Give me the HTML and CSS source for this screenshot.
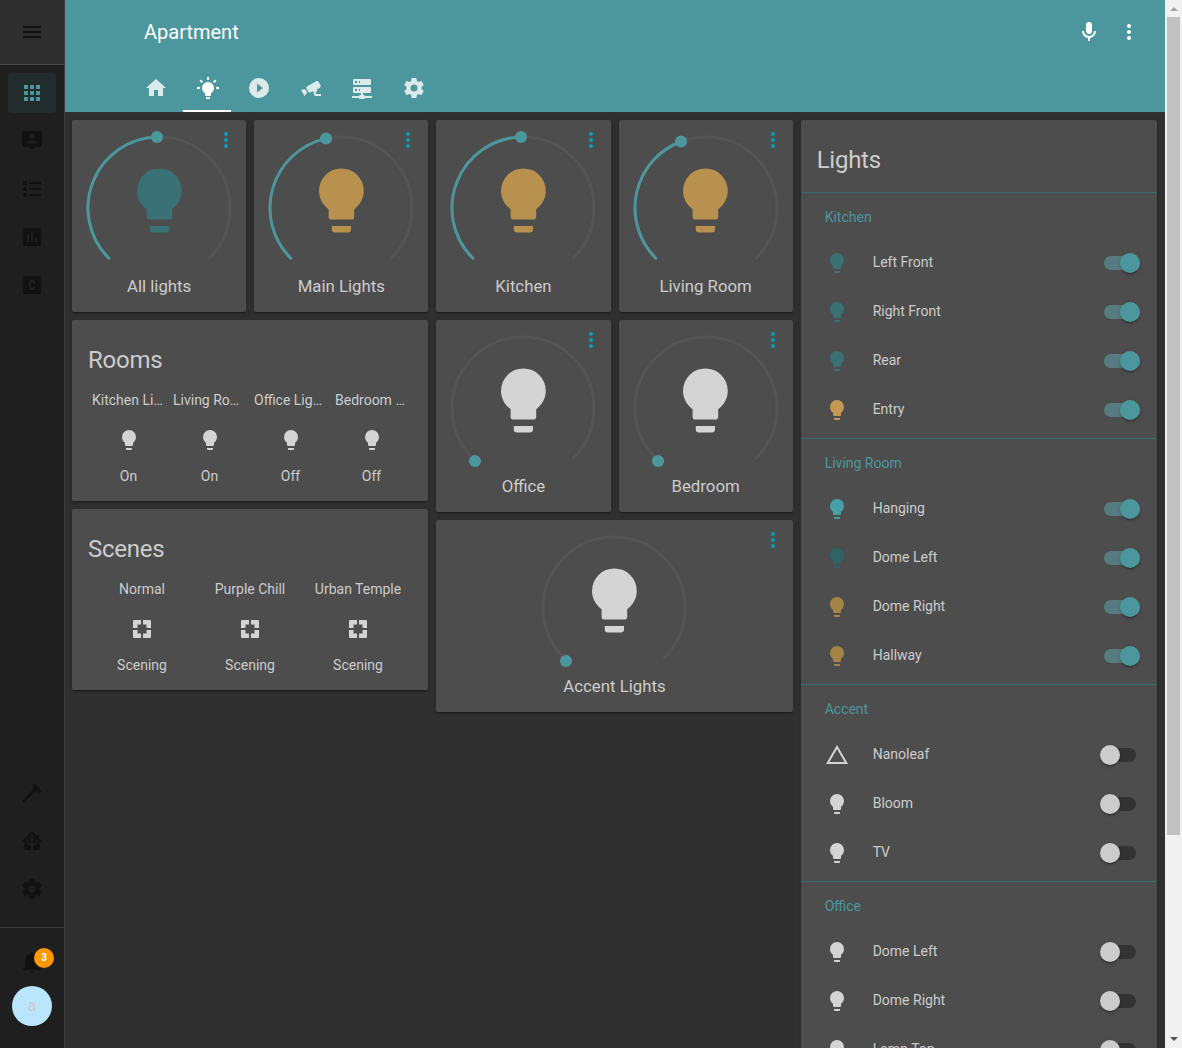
FILE: index.html
```html
<!DOCTYPE html>
<html lang="en">
<head>
<meta charset="utf-8">
<title>Apartment</title>
<link rel="stylesheet" href="styles.css">
</head>
<body>
<svg class="sprite" aria-hidden="true">
  <symbol id="i-bulb" viewBox="0 0 24 24"><path d="M12,2A7,7 0 0,0 5,9C5,11.38 6.19,13.47 8,14.74V17A1,1 0 0,0 9,18H15A1,1 0 0,0 16,17V14.74C17.81,13.47 19,11.38 19,9A7,7 0 0,0 12,2M9,21A1,1 0 0,0 10,22H14A1,1 0 0,0 15,21V20H9V21Z"/></symbol>
  <symbol id="i-dots" viewBox="0 0 24 24"><path d="M12,16A2,2 0 0,1 14,18A2,2 0 0,1 12,20A2,2 0 0,1 10,18A2,2 0 0,1 12,16M12,10A2,2 0 0,1 14,12A2,2 0 0,1 12,14A2,2 0 0,1 10,12A2,2 0 0,1 12,10M12,4A2,2 0 0,1 14,6A2,2 0 0,1 12,8A2,2 0 0,1 10,6A2,2 0 0,1 12,4Z"/></symbol>
  <symbol id="i-cog" viewBox="0 0 24 24"><path d="M12,15.5A3.5,3.5 0 0,1 8.5,12A3.5,3.5 0 0,1 12,8.5A3.5,3.5 0 0,1 15.5,12A3.5,3.5 0 0,1 12,15.5M19.43,12.97C19.47,12.65 19.5,12.33 19.5,12C19.5,11.67 19.47,11.34 19.43,11L21.54,9.37C21.73,9.22 21.78,8.95 21.66,8.73L19.66,5.27C19.54,5.05 19.27,4.96 19.05,5.05L16.56,6.05C16.04,5.66 15.5,5.32 14.87,5.07L14.5,2.42C14.46,2.18 14.25,2 14,2H10C9.75,2 9.54,2.18 9.5,2.42L9.13,5.07C8.5,5.32 7.96,5.66 7.44,6.05L4.95,5.05C4.73,4.96 4.46,5.05 4.34,5.27L2.34,8.73C2.21,8.95 2.27,9.22 2.46,9.37L4.57,11C4.53,11.34 4.5,11.67 4.5,12C4.5,12.33 4.53,12.65 4.57,12.97L2.46,14.63C2.27,14.78 2.21,15.05 2.34,15.27L4.34,18.73C4.46,18.95 4.73,19.03 4.95,18.95L7.44,17.94C7.96,18.34 8.5,18.68 9.13,18.93L9.5,21.58C9.54,21.82 9.75,22 10,22H14C14.25,22 14.46,21.82 14.5,21.58L14.87,18.93C15.5,18.67 16.04,18.34 16.56,17.94L19.05,18.95C19.27,19.03 19.54,18.95 19.66,18.73L21.66,15.27C21.78,15.05 21.73,14.78 21.54,14.63L19.43,12.97Z"/></symbol>
  <symbol id="i-scene" viewBox="0 0 24 24"><path d="M4,3H11V7.5H7.5V11H3V4A1,1 0 0,1 4,3ZM13,3H20A1,1 0 0,1 21,4V11H16.5V7.5H13ZM3,13H7.5V16.5H11V21H4A1,1 0 0,1 3,20ZM16.5,13H21V20A1,1 0 0,1 20,21H13V16.5H16.5Z"/></symbol>
</svg>

<div class="app">
  <aside class="sidebar">
    <div class="side-top">
      <svg class="ic" viewBox="0 0 24 24"><path d="M3,6H21V8H3V6M3,11H21V13H3V11M3,16H21V18H3V16Z"/></svg>
    </div>
    <nav class="side-nav">
      <a class="side-item side-item-on"><svg class="ic" viewBox="0 0 24 24"><path d="M16,20H20V16H16M16,14H20V10H16M10,8H14V4H10M16,8H20V4H16M10,14H14V10H10M4,14H8V10H4M4,20H8V16H4M10,20H14V16H10M4,8H8V4H4V8Z"/></svg></a>
      <a class="side-item"><svg class="ic" viewBox="0 0 24 24"><path fill-rule="evenodd" d="M4,2H20A2,2 0 0,1 22,4V16A2,2 0 0,1 20,18H15L12,21L9,18H4A2,2 0 0,1 2,16V4A2,2 0 0,1 4,2ZM12,4.5A2.5,2.5 0 0,0 9.5,7A2.5,2.5 0 0,0 12,9.5A2.5,2.5 0 0,0 14.5,7A2.5,2.5 0 0,0 12,4.5ZM6.5,14.5H17.5V13.5C17.5,11.8 14,11 12,11C10,11 6.5,11.8 6.5,13.5Z"/></svg></a>
      <a class="side-item"><svg class="ic" viewBox="0 0 24 24"><path d="M5,9.5L7.5,14H2.5L5,9.5M3,4H7V8H3V4M5,20A2,2 0 0,0 7,18A2,2 0 0,0 5,16A2,2 0 0,0 3,18A2,2 0 0,0 5,20M9,5V7H21V5H9M9,19H21V17H9V19M9,13H21V11H9V13Z"/></svg></a>
      <a class="side-item"><svg class="ic" viewBox="0 0 24 24"><path fill-rule="evenodd" d="M5,3H19C20.1,3 21,3.9 21,5V19C21,20.1 20.1,21 19,21H5C3.9,21 3,20.1 3,19V5C3,3.9 3.9,3 5,3ZM7,17H9V10H7ZM11,17H13V7H11ZM15,17H17V13H15Z"/></svg></a>
      <a class="side-item"><svg class="ic" viewBox="0 0 24 24"><path fill-rule="evenodd" d="M5,3H19A2,2 0 0,1 21,5V19A2,2 0 0,1 19,21H5A2,2 0 0,1 3,19V5A2,2 0 0,1 5,3ZM11,7A2,2 0 0,0 9,9V15A2,2 0 0,0 11,17H13A2,2 0 0,0 15,15V14H13V15H11V9H13V10H15V9A2,2 0 0,0 13,7Z"/></svg></a>
    </nav>
    <nav class="side-tools">
      <a class="side-item"><svg class="ic" viewBox="0 0 24 24"><path d="M2 19.63L13.43 8.2L12.72 7.5L14.14 6.07L12 3.89C13.2 2.7 15.09 2.7 16.27 3.89L19.87 7.5L18.45 8.91H21.29L22 9.62L18.45 13.21L17.74 12.5V9.62L16.27 11.04L15.56 10.33L4.13 21.76L2 19.63Z"/></svg></a>
      <a class="side-item"><svg class="ic" viewBox="0 0 24 24"><path d="M21.8,13H20V21H13V17.67L15.79,14.88L16.5,15C17.66,15 18.6,14.06 18.6,12.9C18.6,11.74 17.66,10.8 16.5,10.8A2.1,2.1 0 0,0 14.4,12.9L14.5,13.61L13,15.13V9.65C13.66,9.29 14.1,8.6 14.1,7.8A2.1,2.1 0 0,0 12,5.7A2.1,2.1 0 0,0 9.9,7.8C9.9,8.6 10.34,9.29 11,9.65V15.13L9.5,13.61L9.6,12.9A2.1,2.1 0 0,0 7.5,10.8A2.1,2.1 0 0,0 5.4,12.9A2.1,2.1 0 0,0 7.5,15L8.21,14.88L11,17.67V21H4V13H2.25C1.83,13 1.42,13 1.42,12.79C1.43,12.57 1.85,12.15 2.28,11.72L11,3C11.33,2.67 11.67,2.33 12,2.33C12.33,2.33 12.67,2.67 13,3L17,7V6H19V9L21.78,11.78C22.18,12.18 22.59,12.59 22.6,12.8C22.6,13 22.2,13 21.8,13M7.5,12A0.9,0.9 0 0,1 8.4,12.9A0.9,0.9 0 0,1 7.5,13.8A0.9,0.9 0 0,1 6.6,12.9A0.9,0.9 0 0,1 7.5,12M16.5,12C17,12 17.4,12.4 17.4,12.9C17.4,13.4 17,13.8 16.5,13.8A0.9,0.9 0 0,1 15.6,12.9A0.9,0.9 0 0,1 16.5,12M12,6.9C12.5,6.9 12.9,7.3 12.9,7.8C12.9,8.3 12.5,8.7 12,8.7C11.5,8.7 11.1,8.3 11.1,7.8C11.1,7.3 11.5,6.9 12,6.9Z"/></svg></a>
      <a class="side-item"><svg class="ic"><use href="#i-cog"/></svg></a>
    </nav>
    <div class="side-user">
      <a class="side-bell">
        <svg class="ic" viewBox="0 0 24 24"><path d="M21,19V20H3V19L5,17V11C5,7.9 7.03,5.17 10,4.29C10,4.19 10,4.1 10,4A2,2 0 0,1 12,2A2,2 0 0,1 14,4C14,4.1 14,4.19 14,4.29C16.97,5.17 19,7.9 19,11V17L21,19M14,21A2,2 0 0,1 12,23A2,2 0 0,1 10,21"/></svg>
        <span class="badge">3</span>
      </a>
      <div class="avatar">a</div>
    </div>
  </aside>

  <div class="main">
    <header class="topbar">
      <div class="topbar-row">
        <h1 class="topbar-title">Apartment</h1>
        <svg class="ic topbar-mic" viewBox="0 0 24 24"><path d="M12,2A3,3 0 0,1 15,5V11A3,3 0 0,1 12,14A3,3 0 0,1 9,11V5A3,3 0 0,1 12,2M19,11C19,14.53 16.39,17.44 13,17.93V21H11V17.93C7.61,17.44 5,14.53 5,11H7A5,5 0 0,0 12,16A5,5 0 0,0 17,11H19Z"/></svg>
        <svg class="ic topbar-dots"><use href="#i-dots"/></svg>
      </div>
      <div class="tabs">
        <a class="tab"><svg class="ic" viewBox="0 0 24 24"><path d="M10,20V14H14V20H19V12H22L12,3L2,12H5V20H10Z"/></svg></a>
        <a class="tab tab-on"><svg class="ic" viewBox="0 0 24 24"><path d="M12,6A6,6 0 0,1 18,12C18,14.22 16.79,16.16 15,17.2V19A1,1 0 0,1 14,20H10A1,1 0 0,1 9,19V17.2C7.21,16.16 6,14.22 6,12A6,6 0 0,1 12,6M14,21V22A1,1 0 0,1 13,23H11A1,1 0 0,1 10,22V21H14M20,11H23V13H20V11M1,11H4V13H1V11M13,1V4H11V1H13M4.92,3.5L7.05,5.64L5.63,7.05L3.5,4.93L4.92,3.5M16.95,5.63L19.07,3.5L20.5,4.93L18.37,7.05L16.95,5.63Z"/></svg></a>
        <a class="tab"><svg class="ic" viewBox="0 0 24 24"><path fill-rule="evenodd" d="M10,16.5V7.5L16,12ZM12,2A10,10 0 0,0 2,12A10,10 0 0,0 12,22A10,10 0 0,0 22,12A10,10 0 0,0 12,2Z"/></svg></a>
        <a class="tab"><svg class="ic" viewBox="0 0 24 24"><path d="M18.15,4.94C17.77,4.91 17.37,5 17,5.2L8.35,10.2C7.39,10.76 7.07,12 7.62,12.94L9.12,15.53C9.67,16.5 10.89,16.82 11.85,16.27L13.65,15.23C13.92,15.69 14.32,16.06 14.8,16.27V18.04C14.8,19.13 15.69,20 16.8,20H22V18.04H16.8V16.27C17.59,15.95 18.12,15.18 18.12,14.3C18.12,14 18.06,13.71 17.95,13.44L20.73,11.84C21.69,11.29 22,10.07 21.47,9.11L19.97,6.5C19.6,5.89 19,5 18.15,4.94M6.22,13.17L2,13.87L2.75,15.17L4.75,18.63L5.5,19.93L8.22,16.63L6.22,13.17Z"/></svg></a>
        <a class="tab"><svg class="ic" viewBox="0 0 24 24"><path fill-rule="evenodd" d="M13,19H14A1,1 0 0,1 15,20H22V22H15A1,1 0 0,1 14,23H10A1,1 0 0,1 9,22H2V20H9A1,1 0 0,1 10,19H11V17H4A1,1 0 0,1 3,16V12A1,1 0 0,1 4,11H20A1,1 0 0,1 21,12V16A1,1 0 0,1 20,17H13ZM4,3H20A1,1 0 0,1 21,4V8A1,1 0 0,1 20,9H4A1,1 0 0,1 3,8V4A1,1 0 0,1 4,3ZM9,7H10V5H9ZM9,15H10V13H9ZM5,5V7H7V5ZM5,13V15H7V13Z"/></svg></a>
        <a class="tab"><svg class="ic"><use href="#i-cog"/></svg></a>
      </div>
    </header>

    <main class="columns">
      <div class="column">
        <div class="pair">
          <section class="card dial-card">
            <svg class="dial" viewBox="0 0 150 141"><path class="dial-track" d="M24.8 125.2A71 71 0 1 1 125.2 125.2"/><path class="dial-value" d="M24.8 125.2A71 71 0 0 1 73 4"/><circle class="dial-thumb" cx="73" cy="4" r="6"/></svg>
            <svg class="dial-bulb tone-teal"><use href="#i-bulb"/></svg>
            <svg class="ic card-menu"><use href="#i-dots"/></svg>
            <div class="dial-name">All lights</div>
          </section>
          <section class="card dial-card">
            <svg class="dial" viewBox="0 0 150 141"><path class="dial-track" d="M24.8 125.2A71 71 0 1 1 125.2 125.2"/><path class="dial-value" d="M24.8 125.2A71 71 0 0 1 60 5.6"/><circle class="dial-thumb" cx="60" cy="5.6" r="6"/></svg>
            <svg class="dial-bulb tone-gold"><use href="#i-bulb"/></svg>
            <svg class="ic card-menu"><use href="#i-dots"/></svg>
            <div class="dial-name">Main Lights</div>
          </section>
        </div>

        <section class="card block-card">
          <h2 class="card-title">Rooms</h2>
          <div class="glance glance-4">
            <div class="glance-cell"><div class="glance-name">Kitchen Lights</div><svg class="ic glance-icon"><use href="#i-bulb"/></svg><div class="glance-state">On</div></div>
            <div class="glance-cell"><div class="glance-name">Living Room Lights</div><svg class="ic glance-icon"><use href="#i-bulb"/></svg><div class="glance-state">On</div></div>
            <div class="glance-cell"><div class="glance-name">Office Lights</div><svg class="ic glance-icon"><use href="#i-bulb"/></svg><div class="glance-state">Off</div></div>
            <div class="glance-cell"><div class="glance-name">Bedroom Lights</div><svg class="ic glance-icon"><use href="#i-bulb"/></svg><div class="glance-state">Off</div></div>
          </div>
        </section>

        <section class="card block-card">
          <h2 class="card-title">Scenes</h2>
          <div class="glance glance-3">
            <div class="glance-cell"><div class="glance-name">Normal</div><svg class="ic glance-icon"><use href="#i-scene"/></svg><div class="glance-state">Scening</div></div>
            <div class="glance-cell"><div class="glance-name">Purple Chill</div><svg class="ic glance-icon"><use href="#i-scene"/></svg><div class="glance-state">Scening</div></div>
            <div class="glance-cell"><div class="glance-name">Urban Temple</div><svg class="ic glance-icon"><use href="#i-scene"/></svg><div class="glance-state">Scening</div></div>
          </div>
        </section>
      </div>

      <div class="column">
        <div class="pair">
          <section class="card dial-card">
            <svg class="dial" viewBox="0 0 150 141"><path class="dial-track" d="M24.8 125.2A71 71 0 1 1 125.2 125.2"/><path class="dial-value" d="M24.8 125.2A71 71 0 0 1 73 4"/><circle class="dial-thumb" cx="73" cy="4" r="6"/></svg>
            <svg class="dial-bulb tone-gold"><use href="#i-bulb"/></svg>
            <svg class="ic card-menu"><use href="#i-dots"/></svg>
            <div class="dial-name">Kitchen</div>
          </section>
          <section class="card dial-card">
            <svg class="dial" viewBox="0 0 150 141"><path class="dial-track" d="M24.8 125.2A71 71 0 1 1 125.2 125.2"/><path class="dial-value" d="M24.8 125.2A71 71 0 0 1 50 8.5"/><circle class="dial-thumb" cx="50" cy="8.5" r="6"/></svg>
            <svg class="dial-bulb tone-gold"><use href="#i-bulb"/></svg>
            <svg class="ic card-menu"><use href="#i-dots"/></svg>
            <div class="dial-name">Living Room</div>
          </section>
        </div>
        <div class="pair">
          <section class="card dial-card">
            <svg class="dial" viewBox="0 0 150 141"><path class="dial-track" d="M24.8 125.2A71 71 0 1 1 125.2 125.2"/><circle class="dial-thumb" cx="27" cy="128" r="6"/></svg>
            <svg class="dial-bulb tone-off"><use href="#i-bulb"/></svg>
            <svg class="ic card-menu"><use href="#i-dots"/></svg>
            <div class="dial-name">Office</div>
          </section>
          <section class="card dial-card">
            <svg class="dial" viewBox="0 0 150 141"><path class="dial-track" d="M24.8 125.2A71 71 0 1 1 125.2 125.2"/><circle class="dial-thumb" cx="27" cy="128" r="6"/></svg>
            <svg class="dial-bulb tone-off"><use href="#i-bulb"/></svg>
            <svg class="ic card-menu"><use href="#i-dots"/></svg>
            <div class="dial-name">Bedroom</div>
          </section>
        </div>
        <section class="card dial-card">
          <svg class="dial" viewBox="0 0 150 141"><path class="dial-track" d="M24.8 125.2A71 71 0 1 1 125.2 125.2"/><circle class="dial-thumb" cx="27" cy="128" r="6"/></svg>
          <svg class="dial-bulb tone-off"><use href="#i-bulb"/></svg>
          <svg class="ic card-menu"><use href="#i-dots"/></svg>
          <div class="dial-name">Accent Lights</div>
        </section>
      </div>

      <div class="column">
        <section class="card list-card">
          <h2 class="list-title">Lights</h2>

          <div class="group">
            <div class="group-label">Kitchen</div>
            <div class="row"><svg class="ic row-icon tone-teal"><use href="#i-bulb"/></svg><span class="row-name">Left Front</span><span class="toggle toggle-on"><i class="track"></i><i class="knob"></i></span></div>
            <div class="row"><svg class="ic row-icon tone-teal"><use href="#i-bulb"/></svg><span class="row-name">Right Front</span><span class="toggle toggle-on"><i class="track"></i><i class="knob"></i></span></div>
            <div class="row"><svg class="ic row-icon tone-teal"><use href="#i-bulb"/></svg><span class="row-name">Rear</span><span class="toggle toggle-on"><i class="track"></i><i class="knob"></i></span></div>
            <div class="row"><svg class="ic row-icon tone-gold-bright"><use href="#i-bulb"/></svg><span class="row-name">Entry</span><span class="toggle toggle-on"><i class="track"></i><i class="knob"></i></span></div>
          </div>

          <div class="group">
            <div class="group-label">Living Room</div>
            <div class="row"><svg class="ic row-icon tone-teal-bright"><use href="#i-bulb"/></svg><span class="row-name">Hanging</span><span class="toggle toggle-on"><i class="track"></i><i class="knob"></i></span></div>
            <div class="row"><svg class="ic row-icon tone-teal-dim"><use href="#i-bulb"/></svg><span class="row-name">Dome Left</span><span class="toggle toggle-on"><i class="track"></i><i class="knob"></i></span></div>
            <div class="row"><svg class="ic row-icon tone-gold-dim"><use href="#i-bulb"/></svg><span class="row-name">Dome Right</span><span class="toggle toggle-on"><i class="track"></i><i class="knob"></i></span></div>
            <div class="row"><svg class="ic row-icon tone-gold-dim"><use href="#i-bulb"/></svg><span class="row-name">Hallway</span><span class="toggle toggle-on"><i class="track"></i><i class="knob"></i></span></div>
          </div>

          <div class="group">
            <div class="group-label">Accent</div>
            <div class="row"><svg class="ic row-icon tone-off" viewBox="0 0 24 24"><path fill-rule="evenodd" d="M12,2L1,21H23ZM12,6L19.53,19H4.47Z"/></svg><span class="row-name">Nanoleaf</span><span class="toggle"><i class="track"></i><i class="knob"></i></span></div>
            <div class="row"><svg class="ic row-icon tone-off"><use href="#i-bulb"/></svg><span class="row-name">Bloom</span><span class="toggle"><i class="track"></i><i class="knob"></i></span></div>
            <div class="row"><svg class="ic row-icon tone-off"><use href="#i-bulb"/></svg><span class="row-name">TV</span><span class="toggle"><i class="track"></i><i class="knob"></i></span></div>
          </div>

          <div class="group">
            <div class="group-label">Office</div>
            <div class="row"><svg class="ic row-icon tone-off"><use href="#i-bulb"/></svg><span class="row-name">Dome Left</span><span class="toggle"><i class="track"></i><i class="knob"></i></span></div>
            <div class="row"><svg class="ic row-icon tone-off"><use href="#i-bulb"/></svg><span class="row-name">Dome Right</span><span class="toggle"><i class="track"></i><i class="knob"></i></span></div>
            <div class="row"><svg class="ic row-icon tone-off"><use href="#i-bulb"/></svg><span class="row-name">Lamp Top</span><span class="toggle"><i class="track"></i><i class="knob"></i></span></div>
          </div>

          <div class="group">
            <div class="group-label">Bedroom</div>
            <div class="row"><svg class="ic row-icon tone-off"><use href="#i-bulb"/></svg><span class="row-name">Dome Left</span><span class="toggle"><i class="track"></i><i class="knob"></i></span></div>
            <div class="row"><svg class="ic row-icon tone-off"><use href="#i-bulb"/></svg><span class="row-name">Dome Right</span><span class="toggle"><i class="track"></i><i class="knob"></i></span></div>
            <div class="row"><svg class="ic row-icon tone-off"><use href="#i-bulb"/></svg><span class="row-name">Lamp</span><span class="toggle"><i class="track"></i><i class="knob"></i></span></div>
          </div>
        </section>
      </div>
    </main>
  </div>
</div>

<div class="scrollbar" aria-hidden="true">
  <span class="scroll-up"></span>
  <span class="scroll-thumb"></span>
  <span class="scroll-down"></span>
</div>
</body>
</html>
```
FILE: styles.css
```css
* { box-sizing: border-box; }

html, body { margin: 0; padding: 0; }

body {
  background: #303030;
  color: #cccccc;
  font-family: Roboto, "Liberation Sans", sans-serif;
  font-size: 14px;
  line-height: 20px;
}

.sprite { display: none; }

.ic { display: block; width: 24px; height: 24px; fill: currentColor; flex: none; }

.app { display: flex; align-items: flex-start; padding-right: 17px; }

/* Window scrollbar */
.scrollbar {
  position: fixed;
  top: 0;
  right: 0;
  bottom: 0;
  width: 17px;
  background: #f1f1f1;
  display: flex;
  flex-direction: column;
  align-items: center;
  padding: 7px 0;
}

.scroll-up { width: 0; height: 0; border: 4px solid transparent; border-top: 0; border-bottom-color: #a3a3a3; }

.scroll-thumb { width: 13px; height: 818px; margin-top: 6px; background: #c1c1c1; }

.scroll-down { width: 0; height: 0; margin-top: auto; border: 4px solid transparent; border-bottom: 0; border-top-color: #505050; }

/* Sidebar */
.sidebar {
  position: sticky;
  top: 0;
  width: 65px;
  height: 100vh;
  flex: none;
  display: flex;
  flex-direction: column;
  background: #1f1f1f;
  border-right: 1px solid #3b3b3b;
  color: #111111;
}

.side-top {
  height: 65px;
  flex: none;
  display: flex;
  align-items: center;
  justify-content: center;
  background: #2e2e2e;
  border-bottom: 1px solid #4a4a4a;
}

.side-nav { display: flex; flex-direction: column; padding-top: 8px; }

.side-tools { display: flex; flex-direction: column; margin-top: auto; padding-bottom: 10px; }

.side-item {
  width: 48px;
  height: 40px;
  margin: 0 8px 8px;
  display: flex;
  align-items: center;
  justify-content: center;
  border-radius: 4px;
}

.side-item-on { background: #222c2d; color: #4b979d; }

.side-user {
  height: 121px;
  flex: none;
  border-top: 1px solid #3b3b3b;
}

.side-bell { display: block; width: 24px; margin: 22px auto 0; position: relative; }

.badge {
  position: absolute;
  left: 14px;
  top: -2px;
  width: 20px;
  height: 20px;
  border-radius: 50%;
  background: #ff9800;
  color: #ffffff;
  font-size: 10px;
  font-weight: 700;
  line-height: 20px;
  text-align: center;
}

.avatar {
  width: 40px;
  height: 40px;
  margin: 12px auto 0;
  border-radius: 50%;
  background: #b9e6fc;
  color: #cccccc;
  font-size: 16px;
  line-height: 40px;
  text-align: center;
}

/* Main */
.main { flex: 1; min-width: 0; }

.topbar { height: 112px; background: #4b979d; color: #ffffff; display: flex; flex-direction: column; }

.topbar-row { height: 64px; display: flex; align-items: center; padding-left: 79px; }

.topbar-title { margin: 0; flex: 1; font-size: 20px; font-weight: 400; line-height: 28px; }

.topbar-mic { margin-right: 16px; }

.topbar-dots { margin-right: 24px; }

.tabs { display: flex; padding-left: 65.2px; height: 48px; }

.tab {
  width: 51.6px;
  height: 48px;
  display: flex;
  align-items: center;
  justify-content: center;
  color: rgba(255, 255, 255, 0.8);
  position: relative;
}

.tab-on { color: #ffffff; }

.tab-on::after {
  content: "";
  position: absolute;
  left: 1px;
  right: 2px;
  bottom: 0;
  height: 2px;
  background: #ffffff;
}

.columns {
  display: grid;
  grid-template-columns: repeat(3, 1fr);
  gap: 8px;
  padding: 8px 8px 8px 7px;
  align-items: start;
}

.column { display: flex; flex-direction: column; gap: 8px; min-width: 0; }

.pair { display: flex; gap: 8px; }

.pair > .card { flex: 1; min-width: 0; }

.card {
  background: #4d4d4d;
  border-radius: 2px;
  box-shadow: 0 2px 2px rgba(0, 0, 0, 0.14), 0 1px 5px rgba(0, 0, 0, 0.12), 0 3px 1px -2px rgba(0, 0, 0, 0.2);
}

/* Dial cards */
.dial-card {
  position: relative;
  height: 192px;
  padding-top: 13px;
  display: flex;
  flex-direction: column;
  align-items: center;
}

.dial { display: block; width: 150px; height: 141px; flex: none; overflow: visible; }

.dial-track { fill: none; stroke: #555555; stroke-width: 3; stroke-linecap: round; }

.dial-value { fill: none; stroke: #4b979d; stroke-width: 3; stroke-linecap: round; }

.dial-thumb { fill: #4b979d; }

.dial-bulb {
  position: absolute;
  left: 50%;
  top: 41.6px;
  width: 76.8px;
  height: 76.8px;
  margin-left: -38.4px;
  fill: currentColor;
}

.dial-name { font-size: 16.8px; line-height: 24px; text-align: center; }

.card-menu { position: absolute; top: 8px; right: 8px; color: #03a0b8; }

.tone-teal { color: #3a7175; }
.tone-teal-bright { color: #47a0a6; }
.tone-teal-dim { color: #2f6367; }
.tone-gold { color: #b8914f; }
.tone-gold-bright { color: #c49a52; }
.tone-gold-dim { color: #a48446; }
.tone-off { color: #d4d4d4; }

/* Rooms and Scenes */
.block-card { height: 181px; padding: 24px 16px 0; }

.card-title { margin: 0; font-size: 24px; font-weight: 400; line-height: 32px; letter-spacing: -0.25px; }

.glance { display: grid; margin-top: 14px; }

.glance-4 { grid-template-columns: repeat(4, 81px); }

.glance-3 { grid-template-columns: repeat(3, 108px); }

.glance-cell { display: flex; flex-direction: column; align-items: center; min-width: 0; }

.glance-name { width: 100%; padding: 0 4px; text-align: center; white-space: nowrap; overflow: hidden; text-overflow: ellipsis; }

.glance-icon { margin: 18px 0 14px; color: #d4d4d4; }

/* Lights list */
.list-card { height: 1171px; overflow: hidden; }

.list-title { margin: 0; height: 72px; padding: 24px 16px 0; font-size: 24px; font-weight: 400; line-height: 32px; letter-spacing: -0.25px; }

.group { border-top: 1px solid #3c6b6e; padding: 14px 17px 4px 24px; }

.group-label { color: #4b979d; height: 20px; margin-bottom: 11px; }

.row { height: 49px; display: flex; align-items: center; }

.row-icon { margin-right: 24px; }

.row-name { flex: 1; position: relative; top: -1px; }

.toggle { position: relative; display: block; width: 40px; height: 20px; flex: none; }

.track { position: absolute; left: 0; top: 3px; width: 36px; height: 14px; border-radius: 7px; background: #333333; }

.knob {
  position: absolute;
  left: 0;
  top: 0;
  width: 20px;
  height: 20px;
  border-radius: 50%;
  background: #cccccc;
  box-shadow: 0 2px 2px rgba(0, 0, 0, 0.14), 0 1px 5px rgba(0, 0, 0, 0.12), 0 3px 1px -2px rgba(0, 0, 0, 0.2);
}

.toggle-on .track { left: 4px; background: #577c7f; }

.toggle-on .knob { left: 20px; background: #4b979d; }
```
